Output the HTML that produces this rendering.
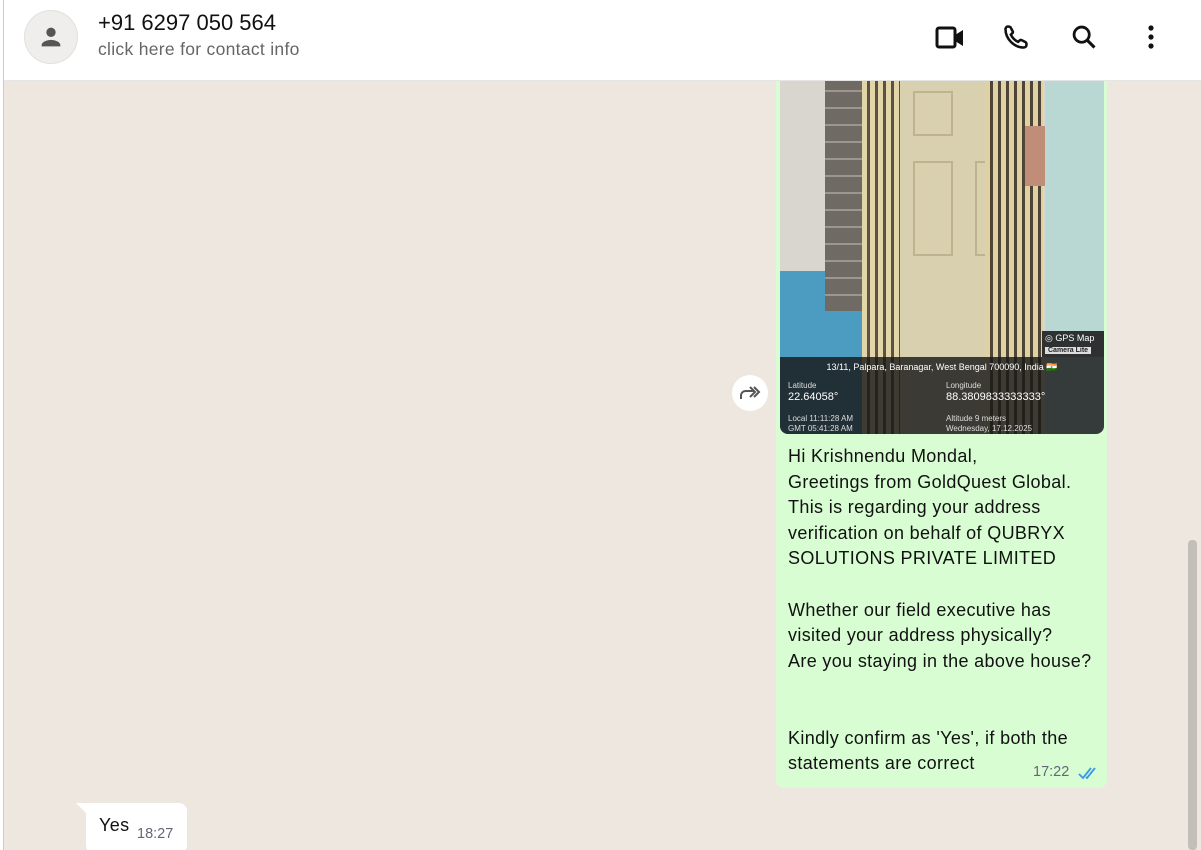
<!DOCTYPE html>
<html><head><meta charset="utf-8"><style>
*{margin:0;padding:0;box-sizing:border-box}
body{width:1201px;height:850px;overflow:hidden;font-family:"Liberation Sans",Roboto,sans-serif;background:#fff;position:relative}
.abs{position:absolute}
#hdr{left:4px;top:0;width:1197px;height:81px;background:#fff;border-bottom:1px solid #e5e5e5}
#chat{left:4px;top:81px;width:1197px;height:769px;background:#eee7df;overflow:hidden}
#lb{left:3px;top:0;width:1px;height:850px;background:#ccc}
.t{color:#111;font-size:18px;line-height:25.6px;letter-spacing:.35px}
</style></head><body>
<div id="lb" class="abs"></div>
<div id="hdr" class="abs">
 <div class="abs" style="left:20px;top:10px;width:54px;height:54px;border-radius:50%;background:#f0eeec;border:1px solid #e2e0dd"></div>
 <svg class="abs" style="left:33px;top:23px" width="28" height="28" viewBox="0 0 24 24"><circle cx="12" cy="8" r="4" fill="#555"/><path d="M4 19c0-3 5-4.5 8-4.5s8 1.5 8 4.5v1H4z" fill="#555"/></svg>
 <div class="abs" style="left:94px;top:10px;font-size:22px;color:#111">+91 6297 050 564</div>
 <div class="abs" style="left:94px;top:39px;font-size:17.5px;color:#666;letter-spacing:.3px">click here for contact info</div>
 <svg class="abs" style="left:930px;top:24px" width="32" height="28" viewBox="0 0 32 28"><rect x="3" y="4" width="18" height="19" rx="2" fill="none" stroke="#111" stroke-width="3"/><path d="M21 11l8-5v16l-8-5z" fill="#111"/></svg>
 <svg class="abs" style="left:998px;top:23px" width="28" height="28" viewBox="0 0 24 24"><path d="M5 3c1 0 2 0 2.5 1l1.7 3.2c.3.6 0 1.3-.5 1.7L7.6 10c1.3 2.7 3.5 4.9 6.2 6.2l1.2-1.1c.5-.5 1.2-.7 1.8-.4l3.2 1.6c1 .5 1 1.4 1 2.3 0 1.3-1 2.4-2.3 2.4C10.4 21 3 13.6 3 5.4 3 4 4 3 5 3z" fill="none" stroke="#111" stroke-width="2.2"/></svg>
 <svg class="abs" style="left:1066px;top:23px" width="28" height="28" viewBox="0 0 24 24"><circle cx="10" cy="10" r="6.5" fill="none" stroke="#111" stroke-width="2.4"/><path d="M15 15l6 6" stroke="#111" stroke-width="2.6"/></svg>
 <svg class="abs" style="left:1137px;top:24px" width="20" height="26" viewBox="0 0 20 26"><circle cx="10" cy="4" r="2.6" fill="#111"/><circle cx="10" cy="13" r="2.6" fill="#111"/><circle cx="10" cy="22" r="2.6" fill="#111"/></svg>
</div>
<div id="chat" class="abs">
 <div class="abs" style="left:1184px;top:459px;width:9px;height:310px;background:#c2beb8;border-radius:4px"></div>
 <div class="abs" style="left:728px;top:294px;width:36px;height:36px;border-radius:50%;background:#fff"></div>
 <svg class="abs" style="left:734px;top:302px" width="24" height="20" viewBox="0 0 24 20"><path d="M3 16v-3c0-3 2-5 5-5h8M12 4l5 5-5 5M16 4l5 5-5 5" fill="none" stroke="#555" stroke-width="2"/></svg>
 <div class="abs" style="left:772px;top:-10px;width:331px;height:717px;background:#d9fdd3;border-radius:8px">
  <div class="abs" style="left:4px;top:10px;width:324px;height:353px;border-radius:0 0 8px 8px;overflow:hidden;background:#d9d6cf">
   <div class="abs" style="left:0;top:190px;width:88px;height:163px;background:#4c9cc2"></div>
   <div class="abs" style="left:45px;top:0;width:40px;height:230px;background:repeating-linear-gradient(0deg,#6f6b64 0 15px,#9c978e 15px 17px)"></div>
   <div class="abs" style="left:82px;top:0;width:38px;height:353px;background:repeating-linear-gradient(90deg,#e2d5a8 0 5px,#5b5242 5px 8px)"></div>
   <div class="abs" style="left:120px;top:0;width:110px;height:353px;background:#d9d0af"></div>
   <div class="abs" style="left:133px;top:10px;width:40px;height:45px;border:2px solid #bdb38f"></div>
   <div class="abs" style="left:133px;top:80px;width:40px;height:95px;border:2px solid #bdb38f"></div>
   <div class="abs" style="left:195px;top:80px;width:28px;height:95px;border:2px solid #bdb38f"></div>
   <div class="abs" style="left:205px;top:0;width:58px;height:353px;background:repeating-linear-gradient(90deg,#e0d1a2 0 5px,#4e4536 5px 8px)"></div>
   <div class="abs" style="left:245px;top:45px;width:22px;height:60px;background:#c08d78"></div>
   <div class="abs" style="left:265px;top:0;width:59px;height:353px;background:#b9d7d3"></div>
   <div class="abs" style="left:0;top:276px;width:324px;height:77px;background:rgba(25,25,25,.82)"></div>
   <div class="abs" style="left:262px;top:250px;width:62px;height:26px;background:rgba(20,20,20,.85);color:#fff;font-size:9px;padding:2px 3px">◎ GPS Map<br><span style="background:#ddd;color:#222;font-size:7px;font-weight:bold;padding:0 3px">Camera Lite</span></div>
   <div class="abs" style="left:0;top:281px;width:324px;text-align:center;color:#fff;font-size:9px">13/11, Palpara, Baranagar, West Bengal 700090, India 🇮🇳</div>
   <div class="abs" style="left:8px;top:300px;color:#ddd;font-size:8px;line-height:10px">Latitude<br><span style="font-size:11px;color:#fff;line-height:13px">22.64058°</span><br><br>Local 11:11:28 AM<br>GMT 05:41:28 AM</div>
   <div class="abs" style="left:166px;top:300px;color:#ddd;font-size:8px;line-height:10px">Longitude<br><span style="font-size:11px;color:#fff;line-height:13px">88.3809833333333°</span><br><br>Altitude 9 meters<br>Wednesday, 17.12.2025</div>
  </div>
  <div class="abs t" style="left:12px;top:373px">Hi Krishnendu Mondal,<br>Greetings from GoldQuest Global.<br>This is regarding your address<br>verification on behalf of QUBRYX<br>SOLUTIONS PRIVATE LIMITED<br><br>Whether our field executive has<br>visited your address physically?<br>Are you staying in the above house?<br><br><br>Kindly confirm as 'Yes', if both the<br>statements are correct</div>
  <div class="abs" style="left:257px;top:693px;font-size:14.5px;color:#667">17:22</div>
  <svg class="abs" style="left:302px;top:695px" width="20" height="14" viewBox="0 0 20 14"><path d="M1 8l4 4 8-10M8 11l1 1 8-10" fill="none" stroke="#3b9be0" stroke-width="1.9"/></svg>
 </div>
 <svg class="abs" style="left:72px;top:722px" width="14" height="14"><path d="M0 0h14v14z" fill="#fff"/></svg>
 <div class="abs" style="left:82px;top:722px;width:101px;height:50px;background:#fff;border-radius:0 8px 8px 8px"></div>
 <div class="abs t" style="left:95px;top:732px">Yes</div>
 <div class="abs" style="left:133px;top:745px;font-size:14.5px;color:#667">18:27</div>
</div>
</body></html>
